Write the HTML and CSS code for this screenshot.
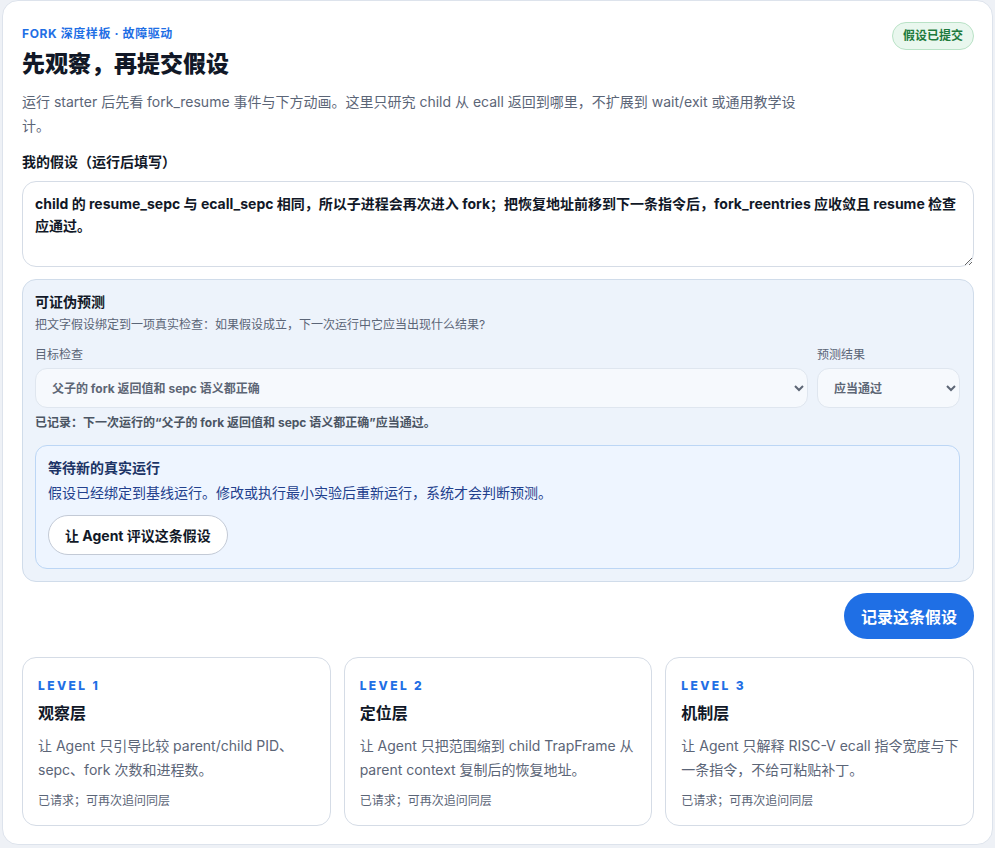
FILE: index.html
```html
<!DOCTYPE html>
<html lang="zh-CN">
<head>
  <meta charset="UTF-8" />
  <meta name="viewport" content="width=device-width, initial-scale=1.0"/>
  <title>先观察，再提交假设</title>
  <link rel="stylesheet" href="styles.css">
</head>
<body>

  <div class="panel">
    <div class="head">
      <div>
        <div class="eyebrow">FORK 深度样板 · 故障驱动</div>
        <h2>先观察，再提交假设</h2>
      </div>
      <span class="badge">假设已提交</span>
    </div>
    <p class="lead">运行 starter 后先看 fork_resume 事件与下方动画。这里只研究 child 从 ecall 返回到哪里，不扩展到 wait/exit 或通用教学设计。</p>

    <label class="field-label" for="hypo">我的假设（运行后填写）</label>
    <textarea id="hypo" class="hypo">child 的 resume_sepc 与 ecall_sepc 相同，所以子进程会再次进入 fork；把恢复地址前移到下一条指令后，fork_reentries 应收敛且 resume 检查应通过。</textarea>

    <div class="predict">
      <h4>可证伪预测</h4>
      <p class="hint">把文字假设绑定到一项真实检查：如果假设成立，下一次运行中它应当出现什么结果?</p>
      <div class="pick">
        <div>
          <div class="small-label">目标检查</div>
          <select class="sel">
            <option>父子的 fork 返回值和 sepc 语义都正确</option>
          </select>
        </div>
        <div>
          <div class="small-label">预测结果</div>
          <select class="sel">
            <option>应当通过</option>
          </select>
        </div>
      </div>
      <p class="recorded">已记录：下一次运行的“父子的 fork 返回值和 sepc 语义都正确”应当通过。</p>

      <div class="waiting">
        <h5>等待新的真实运行</h5>
        <p>假设已经绑定到基线运行。修改或执行最小实验后重新运行，系统才会判断预测。</p>
        <button class="ghost-btn">让 Agent 评议这条假设</button>
      </div>
    </div>

    <div class="actions">
      <button class="primary-btn">记录这条假设</button>
    </div>

    <div class="levels">
      <div class="level">
        <div class="level-tag">LEVEL 1</div>
        <h5>观察层</h5>
        <p>让 Agent 只引导比较 parent/child PID、sepc、fork 次数和进程数。</p>
        <div class="level-note">已请求；可再次追问同层</div>
      </div>
      <div class="level">
        <div class="level-tag">LEVEL 2</div>
        <h5>定位层</h5>
        <p>让 Agent 只把范围缩到 child TrapFrame 从 parent context 复制后的恢复地址。</p>
        <div class="level-note">已请求；可再次追问同层</div>
      </div>
      <div class="level">
        <div class="level-tag">LEVEL 3</div>
        <h5>机制层</h5>
        <p>让 Agent 只解释 RISC-V ecall 指令宽度与下一条指令，不给可粘贴补丁。</p>
        <div class="level-note">已请求；可再次追问同层</div>
      </div>
    </div>
  </div>

</body>
</html>
```

FILE: styles.css
```css
* {
  box-sizing: border-box;
}
body {
  font-family: Inter, "Noto Sans CJK SC", sans-serif;
  background: #eef1f6;
  margin: 0;
  padding: 0 2px;
  color: #111827;
}
.panel {
  background: white;
  border: 1px solid #dde3ec;
  border-radius: 16px;
  padding: 25px 18px 17px 19px;
  min-height: 845px;
}
.head {
  display: flex;
  justify-content: space-between;
  align-items: flex-start;
}
.eyebrow {
  font-size: 12px;
  line-height: 16px;
  font-weight: 700;
  color: #1f6fe5;
  letter-spacing: 0.6px;
}
h2 {
  font-size: 23px;
  line-height: 32px;
  font-weight: 800;
  margin: 6px 0 0;
}
.badge {
  margin-top: -4px;
  padding: 5px 10px;
  font-size: 12px;
  line-height: 16px;
  font-weight: 700;
  color: #1e7a3c;
  background: #e9f7ee;
  border: 1px solid #b9e2c6;
  border-radius: 999px;
}
.lead {
  margin: 10px 0 0;
  max-width: 780px;
  font-size: 14px;
  line-height: 24px;
  color: #5b6577;
}
.field-label {
  display: block;
  margin-top: 14px;
  font-size: 14px;
  line-height: 20px;
  font-weight: 700;
}
.hypo {
  display: block;
  width: 100%;
  height: 86px;
  margin-top: 9px;
  padding: 11px 12px;
  font-family: inherit;
  font-size: 14px;
  line-height: 22px;
  font-weight: 700;
  color: #111827;
  border: 1px solid #d5dce6;
  border-radius: 14px;
  background: white;
  resize: vertical;
}
.predict {
  margin-top: 12px;
  background: #edf3fb;
  border: 1px solid #d0dcea;
  border-radius: 14px;
  padding: 12px 13px 12px 12px;
}
.predict h4 {
  margin: 0;
  font-size: 14px;
  line-height: 20px;
  font-weight: 700;
}
.hint {
  margin: 4px 0 0;
  font-size: 12px;
  line-height: 18px;
  color: #5b6577;
}
.pick {
  display: grid;
  grid-template-columns: 1fr 143px;
  gap: 9px;
  margin-top: 12px;
}
.small-label {
  font-size: 12px;
  line-height: 18px;
  color: #5b6577;
  margin-bottom: 4px;
}
.sel {
  width: 100%;
  height: 40px;
  padding: 0 12px;
  font-family: inherit;
  font-size: 12px;
  font-weight: 700;
  color: #5d6675;
  background: #f6f9fd;
  border: 1px solid #dfe6ef;
  border-radius: 12px;
}
.recorded {
  margin: 6px 0 0;
  font-size: 12px;
  line-height: 18px;
  font-weight: 700;
  color: #4b5563;
}
.waiting {
  margin-top: 13px;
  background: #eef5ff;
  border: 1px solid #bcd6f5;
  border-radius: 12px;
  padding: 12px 12px 13px;
}
.waiting h5 {
  margin: 0;
  font-size: 14px;
  line-height: 20px;
  font-weight: 700;
  color: #1c3466;
}
.waiting p {
  margin: 5px 0 0;
  font-size: 14px;
  line-height: 20px;
  color: #22408d;
}
.ghost-btn {
  margin-top: 12px;
  height: 40px;
  padding: 0 16px;
  font-family: inherit;
  font-size: 14px;
  font-weight: 700;
  color: #111827;
  background: white;
  border: 1px solid #c3cad6;
  border-radius: 999px;
  cursor: pointer;
}
.actions {
  display: flex;
  justify-content: flex-end;
  margin-top: 11px;
}
.primary-btn {
  height: 46px;
  padding: 0 17px;
  font-family: inherit;
  font-size: 16px;
  font-weight: 700;
  color: white;
  background: #1f6fe5;
  border: none;
  border-radius: 999px;
  cursor: pointer;
}
.levels {
  display: grid;
  grid-template-columns: repeat(3, 1fr);
  gap: 13px;
  margin-top: 18px;
}
.level {
  border: 1px solid #d5dce6;
  border-radius: 14px;
  padding: 20px 12px 15px 15px;
}
.level-tag {
  font-size: 12px;
  line-height: 16px;
  font-weight: 800;
  color: #1f6fe5;
  letter-spacing: 2.4px;
}
.level h5 {
  margin: 8px 0 0;
  font-size: 16px;
  line-height: 22px;
  font-weight: 700;
}
.level p {
  margin: 10px 0 0;
  font-size: 14px;
  line-height: 24px;
  color: #5b6577;
}
.level-note {
  margin-top: 10px;
  font-size: 12px;
  line-height: 18px;
  color: #5b6577;
}
```
